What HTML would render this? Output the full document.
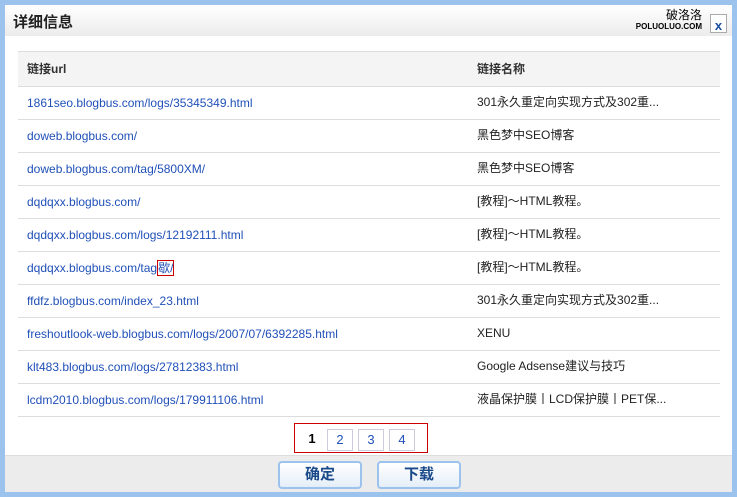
<!DOCTYPE html>
<html><head><meta charset="utf-8"><style>
*{margin:0;padding:0;box-sizing:border-box}
body{width:737px;height:497px;background:#9cc2ee;font-family:"Liberation Sans","Noto Sans CJK SC",sans-serif;font-size:12px;position:relative;overflow:hidden}
.win{position:absolute;left:5px;top:5px;width:727px;height:487px;background:#fff}
.title{position:absolute;left:0;top:0;width:727px;height:31px;background:linear-gradient(#ffffff,#ececec);}
.title span{position:absolute;left:8px;top:6px;font-size:15px;font-weight:bold;color:#222}
.logo{position:absolute;right:30px;top:4px;font-size:12px;color:#000;text-align:right;line-height:12px}
.logo small{display:block;font-size:8px;font-weight:bold}
.x{position:absolute;right:5px;top:9px;width:17px;height:19px;background:#fff;border:1px solid #aaa;color:#1a4ea0;font-weight:bold;font-size:13px;text-align:center;line-height:22px}
table{position:absolute;left:13px;top:46px;width:702px;border-collapse:collapse}
td,th{height:33px;border-bottom:1px solid #ddd;text-align:left;padding-left:9px;font-size:12px;color:#222;white-space:nowrap;line-height:14px}
td:last-child{padding-bottom:2px}
th{height:35px;background:#f4f4f4;border-top:1px solid #ddd;font-weight:bold;color:#333}
td:first-child a{color:#2050b8;text-decoration:none}
.pg{position:absolute;left:289px;top:418px;width:134px;height:30px;border:1px solid #c00}
.pg div{position:absolute;top:5px;width:26px;height:22px;border:1px solid #ccd;text-align:center;line-height:20px;color:#2050b8;font-size:13px}
.foot{position:absolute;left:0;top:450px;width:727px;height:37px;background:#ececec;border-top:1px solid #ddd}
.btn{position:absolute;top:5px;width:84px;height:28px;border:2px solid #9cc2ee;border-radius:4px;background:linear-gradient(#fff,#e4eef8);color:#1a4a8a;font-weight:bold;font-size:15px;text-align:center;line-height:23px}
</style></head><body>
<div class="win">
<div class="title"><span>详细信息</span><div class="logo">破洛洛<small>POLUOLUO.COM</small></div><div class="x">x</div></div>
<table>
<tr><th style="width:450px">链接url</th><th>链接名称</th></tr>
<tr><td><a>1861seo.blogbus.com/logs/35345349.html</a></td><td>301永久重定向实现方式及302重...</td></tr>
<tr><td><a>doweb.blogbus.com/</a></td><td>黑色梦中SEO博客</td></tr>
<tr><td><a>doweb.blogbus.com/tag/5800XM/</a></td><td>黑色梦中SEO博客</td></tr>
<tr><td><a>dqdqxx.blogbus.com/</a></td><td>[教程]～HTML教程。</td></tr>
<tr><td><a>dqdqxx.blogbus.com/logs/12192111.html</a></td><td>[教程]～HTML教程。</td></tr>
<tr><td><a>dqdqxx.blogbus.com/tag<span style="border:1px solid #c00">歇/</span></a></td><td>[教程]～HTML教程。</td></tr>
<tr><td><a>ffdfz.blogbus.com/index_23.html</a></td><td>301永久重定向实现方式及302重...</td></tr>
<tr><td><a>freshoutlook-web.blogbus.com/logs/2007/07/6392285.html</a></td><td>XENU</td></tr>
<tr><td><a>klt483.blogbus.com/logs/27812383.html</a></td><td>Google Adsense建议与技巧</td></tr>
<tr><td><a>lcdm2010.blogbus.com/logs/179911106.html</a></td><td>液晶保护膜丨LCD保护膜丨PET保...</td></tr>
</table>
<div class="pg"><div style="left:4px;border:none;color:#000;font-weight:bold">1</div><div style="left:32px">2</div><div style="left:63px">3</div><div style="left:94px">4</div></div>
<div class="foot"><div class="btn" style="left:273px">确定</div><div class="btn" style="left:372px">下载</div></div>
</div>
</body></html>
